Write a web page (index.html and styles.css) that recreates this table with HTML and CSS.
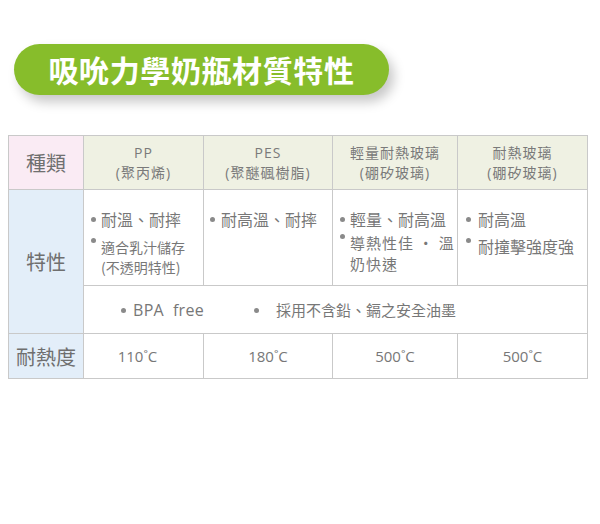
FILE: index.html
```html
<!DOCTYPE html>
<html lang="zh-Hant">
<head>
<meta charset="utf-8">
<link rel="stylesheet" href="styles.css">
</head>
<body>
<div class="page">
  <div class="title-wrap">
    <h1 class="title">吸吮力學奶瓶材質特性</h1>
  </div>
  <table class="spec">
    <colgroup>
      <col class="c0"><col class="c1"><col class="c2"><col class="c3"><col class="c4">
    </colgroup>
    <tr class="row-head">
      <th class="label pink">種類</th>
      <th class="hd">PP<br>(聚丙烯)</th>
      <th class="hd">PES<br>(聚醚碸樹脂)</th>
      <th class="hd">輕量耐熱玻璃<br>(硼矽玻璃)</th>
      <th class="hd">耐熱玻璃<br>(硼矽玻璃)</th>
    </tr>
    <tr class="row-feat">
      <th class="label blue" rowspan="2">特性</th>
      <td class="feat f1">
        <ul class="list">
          <li>耐溫、耐摔</li>
          <li class="hi small">適合乳汁儲存<br>(不透明特性)</li>
        </ul>
      </td>
      <td class="feat f2">
        <ul class="list">
          <li>耐高溫、耐摔</li>
        </ul>
      </td>
      <td class="feat f3">
        <ul class="list">
          <li>輕量、耐高溫</li>
          <li class="hi tight">導熱性佳 · 溫<br>奶快速</li>
        </ul>
      </td>
      <td class="feat f4">
        <ul class="list">
          <li>耐高溫</li>
          <li class="hi">耐撞擊強度強</li>
        </ul>
      </td>
    </tr>
    <tr class="row-bpa">
      <td class="bpa" colspan="4">
        <div class="bpa-line">
          <span class="bpa-item en">BPA&nbsp; free</span>
          <span class="bpa-item zh">採用不含鉛、鎘之安全油墨</span>
        </div>
      </td>
    </tr>
    <tr class="row-heat">
      <th class="label blue">耐熱度</th>
      <td class="heat h1">110˚C</td>
      <td class="heat">180˚C</td>
      <td class="heat">500˚C</td>
      <td class="heat">500˚C</td>
    </tr>
  </table>
</div>
</body>
</html>
```
FILE: styles.css
```css
html, body {
  margin: 0;
  padding: 0;
  background: #ffffff;
}

.page {
  padding: 44px 0 0 8px;
  font-family: "Open Sans", "Noto Sans CJK TC", sans-serif;
  color: #777777;
}

.title-wrap {
  padding-left: 6px;
}

.title {
  margin: 0;
  width: 375px;
  height: 51px;
  border-radius: 26px;
  background: #87bd2b;
  box-shadow: 5px 7px 12px rgba(0, 0, 0, 0.22);
  color: #ffffff;
  font-family: "Noto Sans CJK TC", sans-serif;
  font-weight: 700;
  font-size: 30px;
  line-height: 51px;
  text-align: center;
  letter-spacing: 0.6px;
}

.spec {
  margin-top: 40px;
  border-collapse: collapse;
  table-layout: fixed;
  width: 580px;
}

.c0 { width: 75px; }
.c1 { width: 120px; }
.c2 { width: 129px; }
.c3 { width: 125px; }
.c4 { width: 130px; }

.spec th, .spec td {
  border: 1px solid #c9c9c9;
  padding: 0;
}

.spec .label {
  font-family: "Noto Sans CJK TC", sans-serif;
  font-weight: 400;
  font-size: 20px;
  color: #6f6f6f;
  text-align: center;
  vertical-align: middle;
}

.spec .pink { background: #faebf4; }
.spec .blue { background: #e3eef9; }

.row-head { height: 54px; }
.spec .hd {
  background: #eff1e3;
  font-family: "Open Sans", "Noto Sans CJK TC", sans-serif;
  font-weight: 400;
  font-size: 14px;
  letter-spacing: 1px;
  line-height: 20px;
  color: #7a7a7a;
  text-align: center;
  vertical-align: middle;
  padding-top: 1px;
}

.row-feat { height: 96px; }
.spec .feat {
  vertical-align: top;
  padding-top: 19px;
  font-family: "Noto Sans CJK TC", sans-serif;
  font-size: 16px;
  line-height: 20px;
  color: #777777;
}

.spec .f1 { padding-left: 6px; }
.spec .f2 { padding-left: 5px; }
.spec .f3 { padding-left: 6px; }
.spec .f4 { padding-left: 7px; }

.list {
  list-style: none;
  margin: 0;
  padding: 0;
}

.list li {
  position: relative;
  padding-left: 11px;
  margin-bottom: 7px;
  white-space: nowrap;
}

.f2 .list li { padding-left: 12px; }
.f4 .list li { padding-left: 13px; }

.list li::before {
  content: "";
  position: absolute;
  left: 1px;
  top: 8px;
  width: 5px;
  height: 5px;
  border-radius: 50%;
  background: #8a8a8a;
}

.list li.hi::before { top: 2px; }

.list li.small {
  font-size: 14px;
  line-height: 20px;
  padding-top: 1px;
}

.list li.tight {
  font-size: 15px;
  letter-spacing: 1px;
  line-height: 21px;
  margin-top: -4px;
}

.row-bpa { height: 48px; }
.spec .bpa {
  vertical-align: middle;
  background: #ffffff;
}

.bpa-line {
  display: flex;
  align-items: center;
  padding-left: 37px;
  gap: 50px;
  font-size: 15px;
  color: #777777;
}

.bpa-item {
  position: relative;
  padding-left: 12px;
}

.bpa-item::before {
  content: "";
  position: absolute;
  left: 0;
  top: 50%;
  margin-top: -2px;
  width: 5px;
  height: 5px;
  border-radius: 50%;
  background: #8a8a8a;
}

.bpa-item.en {
  font-family: "Open Sans", sans-serif;
  font-size: 16px;
  letter-spacing: 0.3px;
}

.bpa-item.zh {
  font-family: "Noto Sans CJK TC", sans-serif;
  padding-left: 22px;
}

.row-heat { height: 45px; }
.spec .heat {
  text-align: center;
  vertical-align: middle;
  font-family: "Open Sans", sans-serif;
  font-size: 15px;
  color: #777777;
}

.spec .h1 { padding-right: 12px; }
```
